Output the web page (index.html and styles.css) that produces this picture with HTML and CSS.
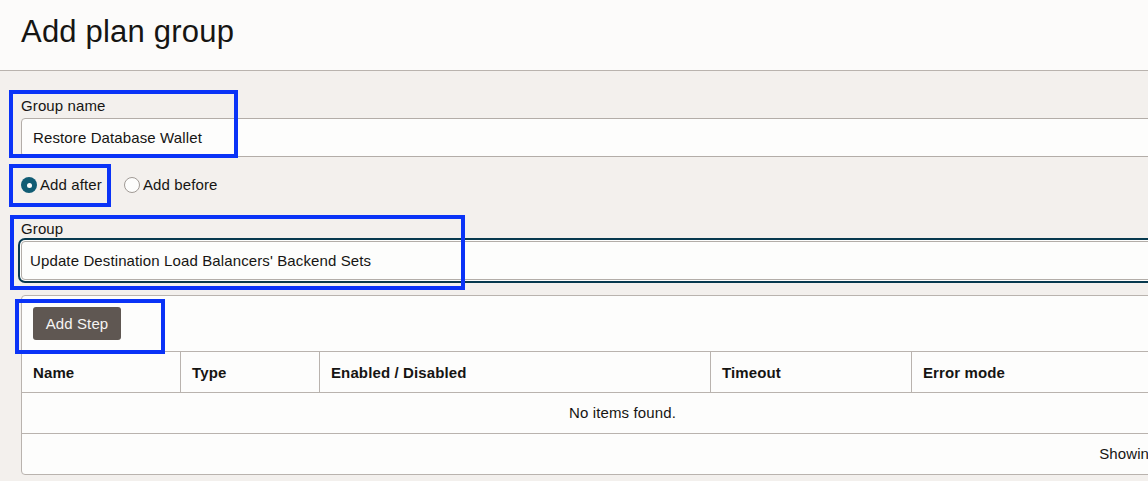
FILE: index.html
```html
<!DOCTYPE html>
<html lang="en">
<head>
<meta charset="utf-8">
<title>Add plan group</title>
<link rel="stylesheet" href="styles.css">
</head>
<body>
<header class="page-header">
  <h1 class="title">Add plan group</h1>
</header>
<main class="main">
  <div class="field">
    <label class="label">Group name</label>
    <div class="input">Restore Database Wallet</div>
    <span class="mark mark-name"></span>
  </div>

  <div class="radios">
    <label class="radio"><span class="dot checked"></span>Add after</label>
    <label class="radio"><span class="dot"></span>Add before</label>
    <span class="mark mark-after"></span>
  </div>

  <div class="field field-group">
    <label class="label">Group</label>
    <div class="input input-focus">Update Destination Load Balancers' Backend Sets</div>
    <span class="mark mark-group"></span>
  </div>

  <section class="card">
    <div class="toolbar">
      <button class="btn">Add Step</button>
    </div>
    <div class="row head">
      <div class="cell c1">Name</div>
      <div class="cell c2">Type</div>
      <div class="cell c3">Enabled / Disabled</div>
      <div class="cell c4">Timeout</div>
      <div class="cell c5">Error mode</div>
    </div>
    <div class="row empty">No items found.</div>
    <div class="row foot">Showing 0 items</div>
    <span class="mark mark-step"></span>
  </section>
</main>
</body>
</html>
```
FILE: styles.css
```css
html, body {
  margin: 0;
  padding: 0;
  overflow: hidden;
}
body {
  background: #f3f0ed;
  font-family: "Liberation Sans", Arial, sans-serif;
  color: #161513;
  font-size: 15px;
  line-height: 18px;
  width: 1260px;
  letter-spacing: 0.12px;
}
.page-header {
  background: #fcfbfa;
  height: 70px;
  border-bottom: 1px solid #b9b3ae;
  box-sizing: content-box;
}
.title {
  margin: 0;
  padding: 14px 0 0 21px;
  font-size: 31px;
  line-height: 36px;
  font-weight: normal;
  letter-spacing: 0.2px;
}
.main {
  padding: 26px 21px 0 21px;
  width: 1203px;
}
.field {
  position: relative;
  display: flex;
  flex-direction: column;
}
.label {
  display: block;
  margin-bottom: 3px;
}
.input {
  height: 39px;
  box-sizing: border-box;
  border: 1px solid #b3ada8;
  border-radius: 4px;
  background: #fdfdfc;
  padding: 1px 11px 0;
  line-height: 36px;
}
.input-focus {
  padding-left: 8px;
  box-shadow: 0 0 0 1px #fdfdfc, 0 0 0 3px #07394e;
}
.radios {
  position: relative;
  display: flex;
  align-items: center;
  gap: 22px;
  margin: 19px 0 26px;
  height: 18px;
}
.radio {
  display: flex;
  align-items: center;
  gap: 3px;
}
.dot {
  width: 16px;
  height: 16px;
  box-sizing: border-box;
  border-radius: 50%;
  border: 1px solid #a09a95;
  background: #fdfdfc;
  display: flex;
  align-items: center;
  justify-content: center;
}
.dot.checked {
  border: none;
  background: #115c74;
}
.dot.checked::after {
  content: "";
  width: 5px;
  height: 5px;
  border-radius: 50%;
  background: #fdfdfc;
}
.card {
  position: relative;
  margin-top: 15px;
  background: #fdfdfc;
  border: 1px solid #b9b3ae;
  border-radius: 4px;
}
.toolbar {
  height: 55px;
  display: flex;
  align-items: center;
  padding-left: 11px;
  border-bottom: 1px solid #b9b3ae;
}
.btn {
  font-family: inherit;
  font-size: 15px;
  letter-spacing: 0.12px;
  color: #f6f4f2;
  background: #5f5752;
  border: none;
  border-radius: 3px;
  height: 33px;
  width: 88px;
  padding: 0;
  line-height: 33px;
}
.row {
  height: 40px;
  border-bottom: 1px solid #b9b3ae;
  display: flex;
  align-items: center;
}
.row:last-of-type {
  border-bottom: none;
}
.head .cell {
  font-weight: bold;
  height: 100%;
  display: flex;
  align-items: center;
  padding-left: 11px;
  padding-top: 1px;
  box-sizing: border-box;
  border-right: 1px solid #b9b3ae;
}
.head .c1 { width: 159px; }
.head .c2 { width: 139px; }
.head .c3 { width: 391px; }
.head .c4 { width: 201px; }
.head .c5 { flex: 1; border-right: none; }
.empty {
  justify-content: center;
}
.foot {
  justify-content: flex-end;
  padding-right: 12px;
}
.mark {
  position: absolute;
  box-sizing: border-box;
  border: 4px solid #0a33f7;
  pointer-events: none;
}
.mark-name { left: -12px; top: -7px; width: 229px; height: 68px; }
.mark-after { left: -12px; top: -12px; width: 102px; height: 43px; }
.mark-group { left: -11px; top: -5px; width: 455px; height: 75px; }
.mark-step { left: -7px; top: 3px; width: 150px; height: 55px; }
```
